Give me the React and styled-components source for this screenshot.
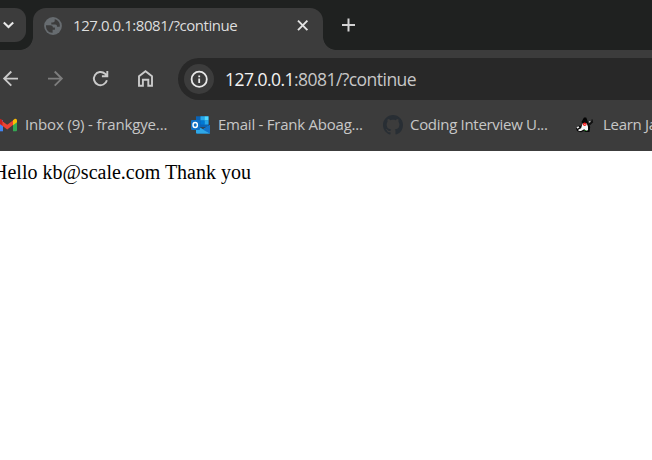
import React from 'react';
import styled, { createGlobalStyle, css } from 'styled-components';

const GlobalStyle = createGlobalStyle`
  * { box-sizing: border-box; }
  html, body { margin: 0; overflow: hidden; background: #fff; }
`;

const uiFont = css`
  font-family: 'Open Sans', 'Noto Sans', sans-serif;
  white-space: nowrap;
`;

const Browser = styled.div`
  width: 652px;
  height: 460px;
  overflow: hidden;
  display: flex;
  flex-direction: column;
  background: #fff;
`;

const TabStrip = styled.div`
  flex: none;
  height: 50px;
  padding-top: 8px;
  display: flex;
  background: #1f2120;
`;

const TabSearch = styled.button`
  width: 26px;
  height: 34px;
  margin: 0 7px 0 0;
  padding: 0;
  border: 0;
  border-radius: 0 11px 11px 0;
  background: #3c3c3c;
`;

const Tab = styled.div`
  position: relative;
  width: 290px;
  height: 42px;
  padding: 0 14px 7px 11px;
  display: flex;
  align-items: center;
  border-radius: 13px 13px 0 0;
  background: #3c3c3c;

  &::before,
  &::after {
    content: '';
    position: absolute;
    bottom: 0;
    width: 13px;
    height: 13px;
  }
  &::before {
    left: -13px;
    background: radial-gradient(circle at 0 0, transparent 12.5px, #3c3c3c 13.2px);
  }
  &::after {
    right: -13px;
    background: radial-gradient(circle at 100% 0, transparent 12.5px, #3c3c3c 13.2px);
  }
`;

const TabTitle = styled.span`
  ${uiFont}
  flex: 1;
  margin: -2px 0 0 11px;
  color: #dedede;
  font-size: 15px;
  line-height: 20px;
  letter-spacing: -0.44px;
`;

const NewTab = styled.div`
  margin: 9px 0 0 17px;
  height: 16px;
`;

const Toolbar = styled.div`
  flex: none;
  height: 58px;
  padding: 8px 0;
  display: flex;
  align-items: center;
  background: #3c3c3c;
`;

const NavButtons = styled.div`
  width: 178px;
  display: flex;
  gap: 21px;
`;

const AddressBar = styled.div`
  flex: 1;
  height: 42px;
  padding-left: 6px;
  display: flex;
  align-items: center;
  border-radius: 21px 0 0 21px;
  background: #282828;
`;

const SiteInfo = styled.div`
  width: 30px;
  height: 30px;
  display: flex;
  align-items: center;
  justify-content: center;
  border-radius: 50%;
  background: #3c3c3c;
`;

const Url = styled.span`
  ${uiFont}
  margin-left: 11px;
  color: #c7c7c7;
  font-size: 17.5px;
  line-height: 24px;
  letter-spacing: -0.54px;
`;

const Host = styled.span`
  color: #f2f2f2;
`;

const Bookmarks = styled.div`
  flex: none;
  height: 43px;
  display: flex;
  padding-bottom: 9px;
  align-items: center;
  background: #3c3c3c;
`;

const Bookmark = styled.div`
  flex: none;
  width: ${(p) => p.$width}px;
  display: flex;
  align-items: center;
`;

const BookmarkName = styled.span`
  ${uiFont}
  margin: -2px 0 0 ${(p) => p.$gap}px;
  color: #c7c7c7;
  font-size: 15px;
  line-height: 20px;
  letter-spacing: ${(p) => p.$spacing}px;
`;

const Page = styled.main`
  flex: 1;
  padding-top: 10px;
  margin-left: -7px;
  color: #000;
  font: 20px/23px 'Liberation Serif', 'Times New Roman', serif;
  white-space: nowrap;
`;

const ChevronIcon = () => (
  <svg width="26" height="34" viewBox="0 0 26 34" fill="none" stroke="#e8e8e8" strokeWidth="2.1">
    <path d="M3.8 14.5 8.5 19l4.7-4.5" />
  </svg>
);

const GlobeIcon = () => (
  <svg width="18" height="18" viewBox="0 0 18 18">
    <circle cx="9" cy="9" r="8.9" fill="#676c70" />
    <path d="M2 8.2h4.2c1.7 0 2.7.8 2.7 2.4h2v2.2H8.6v2.9C4.6 16 1.7 12.6 2 8.2ZM10.7 2.3v1.5c0 1.1-.8 1.7-2 1.7H7.300v2.100h3.900c1.400 0 1.800.8 1.800 2.100h2.700C16.500 6.300 14.200 2.900 10.700 2.300Z" fill="#3c3c3c" />
  </svg>
);

const CloseIcon = () => (
  <svg width="12" height="12" viewBox="0 0 12 12" stroke="#e3e3e3" strokeWidth="1.9">
    <path d="m1 .7 9.400 9.400M10.400.7 1 10.100" />
  </svg>
);

const PlusIcon = () => (
  <svg width="16" height="16" viewBox="0 0 16 16" stroke="#d2d2d2" strokeWidth="2" display="block">
    <path d="M2 8h13M8.500 1.500v13" />
  </svg>
);

const BackIcon = () => (
  <svg width="24" height="24" viewBox="0 0 24 24" fill="none" stroke="#cacaca" strokeWidth="1.900">
    <path d="M18 11.600H4.200M11.300 4.500l-7.100 7.100 7.100 7.100" />
  </svg>
);

const ForwardIcon = () => (
  <svg width="24" height="24" viewBox="0 0 24 24" fill="none" stroke="#7d7d7d" strokeWidth="1.900">
    <path d="M3 11.600h13.800M9.700 4.500l7.100 7.100-7.100 7.100" />
  </svg>
);

const ReloadIcon = () => (
  <svg width="24" height="24" viewBox="0 0 24 24" fill="none" stroke="#cacaca" strokeWidth="1.900">
    <path d="M16.900 13.200A6.600 6.600 0 1 1 15 6.700l2 2.100M17.300 4v5.300h-5.400" />
  </svg>
);

const HomeIcon = () => (
  <svg width="24" height="24" viewBox="0 0 24 24" fill="none" stroke="#cacaca" strokeWidth="1.900">
    <path d="M4 9.300 10.500 4.300 17 9.300v9.500h-3.700v-6H7.900v6H4Z" />
  </svg>
);

const InfoIcon = () => (
  <svg width="18" height="18" viewBox="0 0 18 18" fill="none" stroke="#e8e8e8" strokeWidth="1.800">
    <circle cx="9.200" cy="9.200" r="7.600" />
    <path d="M9.200 8.400V13M9.200 5.400v1.800" />
  </svg>
);

const GmailIcon = () => (
  <svg width="17" height="18" viewBox="0 0 17 18">
    <path d="M0 4h3v11.300H0Z" fill="#4285f4" />
    <path d="M13 7.400 17 4.500v9.800q0 1-1 1h-3Z" fill="#34a853" />
    <path d="M0 3.500 7.200 8.800 13.600 4v4.600l-6.400 4.800L0 8Z" fill="#ea4335" />
    <path d="M0 2.700 2.500 4v5.800L0 8Z" fill="#c5221f" />
    <path d="M13 4.200l1.300-1c1.400-.9 2.700 0 2.700 1.500v1.500l-4 3Z" fill="#fbbc04" />
  </svg>
);

const OutlookIcon = () => (
  <svg width="20" height="18" viewBox="0 0 20 18">
    <path d="M5 .3h12.500v11H5Z" fill="#0a63b5" />
    <path d="M9.500.3h4v4.200h-4Z" fill="#28a8ea" />
    <path d="M13.500.3h4v4.200h-4Z" fill="#50d9ff" />
    <path d="M13.500 4.500h4v4h-4Z" fill="#28a8ea" />
    <path d="M9.500 4.500h4v4h-4Z" fill="#0078d4" />
    <path d="M5 9.500 12 13l7-4v8.500H6q-1 0-1-1Z" fill="#1689dc" />
    <path d="M5 9.500 19 17.500H6q-1 0-1-1Z" fill="#2fa8e8" />
    <path d="m12 13.400 7-4.400v8.500Z" fill="#1473c9" />
    <rect x="0" y="4" width="9" height="10" rx="1" fill="#0f6fc5" />
    <ellipse cx="4.200" cy="9" rx="2.200" ry="2.500" fill="none" stroke="#fff" strokeWidth="1.400" />
  </svg>
);

const GithubIcon = () => (
  <svg width="20" height="20" viewBox="0 0 16 16">
    <path
      fill="#282e34"
      d="M8 0C3.580 0 0 3.580 0 8c0 3.540 2.290 6.530 5.470 7.590.4.070.55-.17.55-.38 0-.19-.01-.82-.01-1.490-2.010.37-2.530-.49-2.690-.94-.09-.23-.48-.94-.82-1.130-.28-.15-.68-.52-.01-.53.63-.01 1.080.58 1.230.82.72 1.210 1.870.87 2.330.66.07-.52.28-.87.51-1.070-1.780-.2-3.640-.89-3.640-3.950 0-.87.31-1.590.82-2.150-.08-.2-.36-1.020.08-2.120 0 0 .67-.21 2.200.82.64-.18 1.320-.27 2-.27s1.360.09 2 .27c1.530-1.040 2.200-.82 2.200-.82.44 1.100.16 1.920.08 2.120.51.56.82 1.270.82 2.150 0 3.070-1.870 3.750-3.650 3.950.29.25.54.73.54 1.480 0 1.070-.01 1.930-.01 2.200 0 .21.15.46.55.38A8.010 8.010 0 0 0 16 8c0-4.420-3.580-8-8-8Z"
    />
  </svg>
);

const DukeIcon = () => (
  <svg width="19" height="16" viewBox="0 0 19 16">
    <path d="M8 .5h2.200L12 5l1.700 5.500-7.700-1-.3-5Z" fill="#050505" />
    <path d="M0 11h2V8.800h3L6.500 7h6.200l1.500 3-.7 5H9.500l-1.500-1-3 1.200-4-1.200Z" fill="#080808" />
    <path d="M6.500 6.500h4.300l1.200 3.300V13l-1.500 1-2.300-1.800L5 14H2.500v-1.500l2.600-1.200Z" fill="#f5f5f5" />
    <path d="M1 11 3 9.800" stroke="#e8e8e8" strokeWidth="1.500" />
    <path d="m12.500 7 2-2.500 2-1 .7 1.800-3.200 3Z" fill="#101010" />
    <path d="m13.300 5.200 1-.8" stroke="#e8e8e8" strokeWidth="1.200" />
    <path d="M15.500 2.500h1.200v1.200h-1.200Z" fill="#080808" />
    <circle cx="8.700" cy="7.300" r="1.800" fill="#f01818" />
    <path d="M8.200 7.500h1.300" stroke="#ff9d9d" strokeWidth="1" />
    <path d="M8.500 13.500h2" stroke="#277b28" strokeWidth="1" />
  </svg>
);

export default function App() {
  return (
    <Browser>
      <GlobalStyle />
      <TabStrip>
        <TabSearch aria-label="Search tabs"><ChevronIcon /></TabSearch>
        <Tab>
          <GlobeIcon />
          <TabTitle>127.0.0.1:8081/?continue</TabTitle>
          <CloseIcon />
        </Tab>
        <NewTab><PlusIcon /></NewTab>
      </TabStrip>
      <Toolbar>
        <NavButtons>
          <BackIcon />
          <ForwardIcon />
          <ReloadIcon />
          <HomeIcon />
        </NavButtons>
        <AddressBar>
          <SiteInfo><InfoIcon /></SiteInfo>
          <Url><Host>127.0.0.1</Host>:8081/?continue</Url>
        </AddressBar>
      </Toolbar>
      <Bookmarks>
        <Bookmark $width={191}>
          <GmailIcon />
          <BookmarkName $gap={8} $spacing={-0.16}>Inbox (9) - frankgye...</BookmarkName>
        </Bookmark>
        <Bookmark $width={192}>
          <OutlookIcon />
          <BookmarkName $gap={7} $spacing={-0.24}>Email - Frank Aboag...</BookmarkName>
        </Bookmark>
        <Bookmark $width={193}>
          <GithubIcon />
          <BookmarkName $gap={7} $spacing={-0.3}>Coding Interview U...</BookmarkName>
        </Bookmark>
        <Bookmark $width={120}>
          <DukeIcon />
          <BookmarkName $gap={8} $spacing={-0.3}>Learn Java</BookmarkName>
        </Bookmark>
      </Bookmarks>
      <Page>Hello kb@scale.com Thank you</Page>
    </Browser>
  );
}
